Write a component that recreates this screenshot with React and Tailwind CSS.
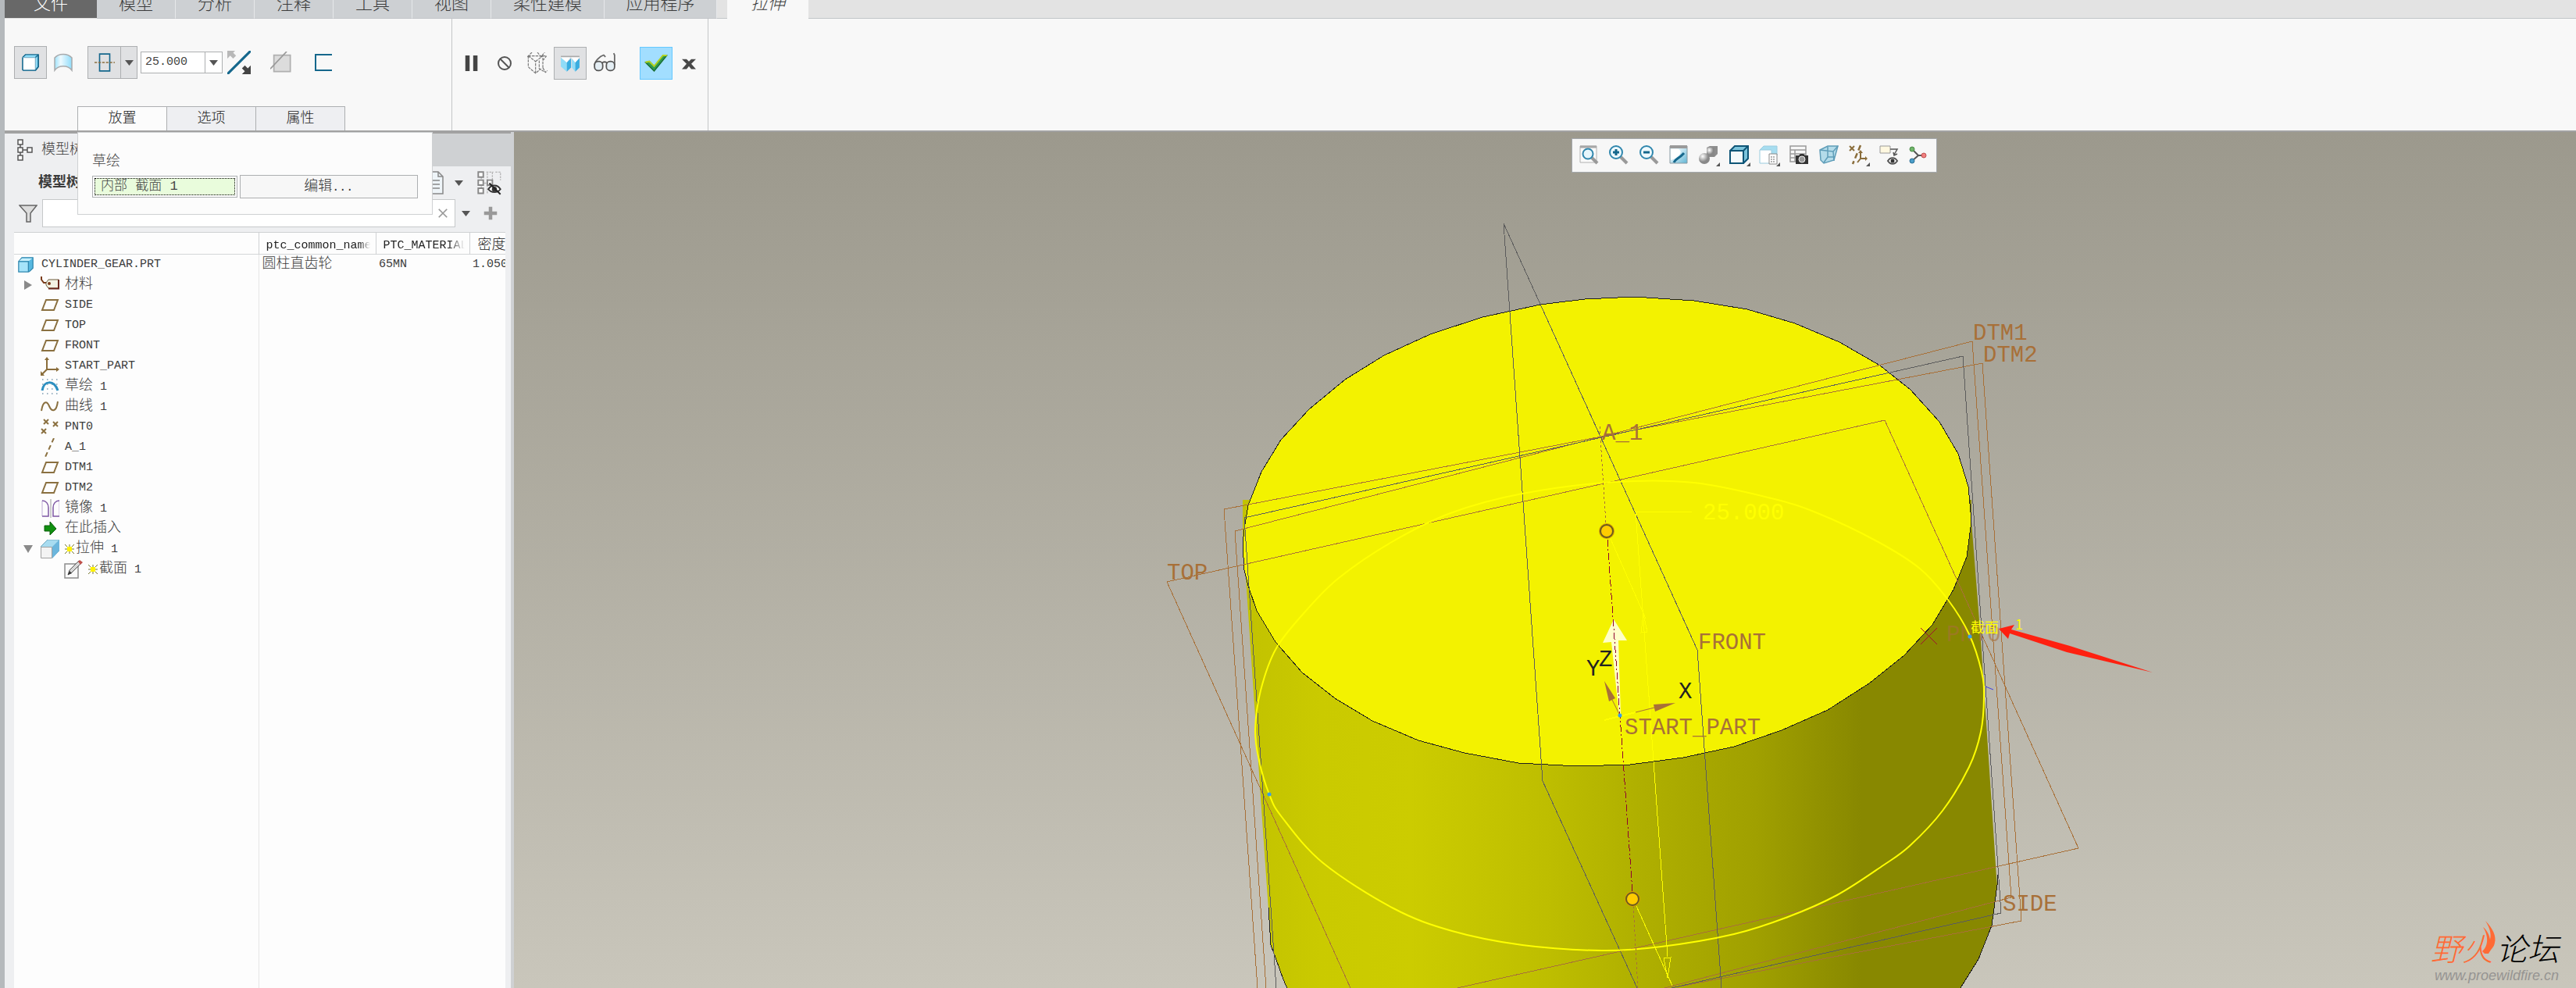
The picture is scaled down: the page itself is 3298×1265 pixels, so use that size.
import clsx from 'clsx'

const RIBBON_TABS = [
  { label: '模型', width: 'w-[101px]' },
  { label: '分析', width: 'w-[101px]' },
  { label: '注释', width: 'w-[101px]' },
  { label: '工具', width: 'w-[101px]' },
  { label: '视图', width: 'w-[101px]' },
  { label: '柔性建模', width: 'w-[145px]' },
  { label: '应用程序', width: 'w-[144px]' },
]

const TREE = [
  { icon: 'material', label: '材料', caret: 'right' },
  { icon: 'plane', label: 'SIDE' },
  { icon: 'plane', label: 'TOP' },
  { icon: 'plane', label: 'FRONT' },
  { icon: 'csys', label: 'START_PART' },
  { icon: 'sketch', label: '草绘 1' },
  { icon: 'curve', label: '曲线 1' },
  { icon: 'points', label: 'PNT0' },
  { icon: 'axis', label: 'A_1' },
  { icon: 'plane', label: 'DTM1' },
  { icon: 'plane', label: 'DTM2' },
  { icon: 'mirror', label: '镜像 1' },
  { icon: 'insert', label: '在此插入' },
  { icon: 'extrude', label: '拉伸 1', caret: 'down', fresh: true },
  { icon: 'section', label: '截面 1', fresh: true, child: true },
]

// Latin runs are set in a narrower mono size so two of them fill one CJK cell
function Mixed({ text }) {
  return text.split(/([\x20-\x7e]+)/).filter(Boolean).map((part, i) => (
    <span key={i} className={/^[\x20-\x7e]/.test(part) ? 'text-[15px] whitespace-pre' : 'text-[18px]'}>
      {part}
    </span>
  ))
}

/* ---------- tree icons ---------- */

const TREE_ICONS = {
  material: (
    <>
      <path d="M1 1v4l3 4h4" fill="none" stroke="#7a3b1a" strokeWidth="2" />
      <path d="M10 5h13v11H10l-3-4V9z" fill="#f4f3e4" stroke="#6b5b3a" strokeWidth="1" />
      <path d="M10 16.500h13V5" fill="none" stroke="#6b2a1e" strokeWidth="2" />
      <circle cx="11" cy="10" r="2" fill="#7a3b1a" />
    </>
  ),
  plane: <path d="M7 5h15l-5 13H2z" fill="none" stroke="#8a7040" strokeWidth="2" />,
  csys: (
    <>
      <path d="M8 2v14h14M8 16l-6 6" fill="none" stroke="#8a6d3b" strokeWidth="2" />
      <path d="M5 4l3-4 3 4zM20 13l4 3-4 3zM0 18v6h5z" fill="#8a6d3b" />
    </>
  ),
  sketch: (
    <>
      <path d="M2 3h20M2 9h20M2 15h20M2 21h20" stroke="#7d9bb0" strokeWidth="1.500" strokeDasharray="1.500 4.500" />
      <path d="M2 17c2-13 15-14 20 0" fill="none" stroke="#2c8fc0" strokeWidth="3" />
    </>
  ),
  curve: <path d="M1 17C3 4 8 4 11 11s9 9 11-6" fill="none" stroke="#8a7040" strokeWidth="2" />,
  points: (
    <path d="M4 2l6 6m0-6L4 8M16 5l6 6m0-6l-6 6M1 14l6 6m0-6l-6 6" fill="none" stroke="#8a7040" strokeWidth="2" />
  ),
  axis: <path d="M17 0L6 24" stroke="#8a7040" strokeWidth="2" strokeDasharray="6 4" />,
  mirror: (
    <>
      <path d="M2 2v20M24 2v20" stroke="#d4c8e4" strokeWidth="1.500" />
      <path d="M2 2c5 0 8 4 8 9v11H2M24 2c-5 0-8 4-8 9v11h8" fill="none" stroke="#7e57a4" strokeWidth="1.500" />
      <path d="M13 0v24" stroke="#9a9a9a" strokeWidth="1" />
    </>
  ),
  insert: <path d="M5 8h7V3l8 9-8 8v-5H5z" fill="#109010" stroke="#0a5c0a" />,
  extrude: (
    <>
      <path d="M0 9L9 0h15v14l-9 9z" fill="#a8dcf0" stroke="#6fa8c0" />
      <path d="M15 9l9-9v14l-9 10z" fill="#6cb6dc" />
      <path d="M.5 9.500h14v14H.5z" fill="#f3f3f3" stroke="#a0a0a0" />
    </>
  ),
  section: (
    <>
      <path d="M1 5h17v18H1z" fill="#fafafa" stroke="#8c8c8c" strokeWidth="1.500" />
      <path d="M5 19l2-6L19 1l3 3L10 16z" fill="#d8d8d8" stroke="#555" />
      <path d="M5 19l2-5 3 3z" fill="#333" />
      <path d="M18 2l2-2 4 3-3 3z" fill="#c0504a" />
    </>
  ),
}

function Icon({ children, size = 24, className }) {
  return (
    <svg width={size} height={size} viewBox="0 0 24 24" className={clsx('shrink-0', className)} aria-hidden="true">
      {children}
    </svg>
  )
}

function Caret({ className }) {
  return (
    <svg width="11" height="7" viewBox="0 0 11 7" className={clsx('shrink-0', className)} aria-hidden="true">
      <path d="M0 0h11L5.500 7z" fill="#555" />
    </svg>
  )
}

function Fresh() {
  return (
    <svg width="12" height="12" viewBox="0 0 12 12" className="mr-[2px] shrink-0" aria-hidden="true">
      <path d="M0 0l12 12M12 0L0 12M6 0v12M0 6h12" stroke="#777730" strokeWidth="1" />
      <path d="M3 3h6v6H3z" fill="#fff200" />
    </svg>
  )
}

/* ---------- ribbon ---------- */

function Ribbon() {
  return (
    <nav className="flex h-6 shrink-0 overflow-hidden bg-[#e3e3e3] text-[22px] leading-[22px] text-[#3c3c3c]">
      <button className="flex h-[23px] w-[118px] items-end justify-center bg-[#686868] pb-[5px] text-white">文件</button>
      {RIBBON_TABS.map((tab) => (
        <button
          key={tab.label}
          className={clsx(
            'flex items-end justify-center border-r border-b border-r-[#e6e8ea] border-b-[#c2c5c8] bg-[#cdd0d3] pb-[5px]',
            tab.width,
          )}
        >
          {tab.label}
        </button>
      ))}
      <div className="w-[13px] border-b border-[#c2c5c8]" />
      <button className="flex w-[104px] items-end justify-center bg-[#f8f8f8] pb-[6px] italic">拉伸</button>
      <div className="flex-1 border-b border-[#c2c5c8]" />
    </nav>
  )
}

function ToolButton({ label, pressed, accent, className, children }) {
  return (
    <button
      aria-label={label}
      className={clsx(
        'flex h-[42px] w-[42px] shrink-0 items-center justify-center border',
        pressed && 'border-[#adafb1] bg-[#e0e1e3]',
        accent && 'border-[#66c8ff] bg-[#a2deff]',
        !pressed && !accent && 'border-transparent',
        className,
      )}
    >
      {children}
    </button>
  )
}

function Dashboard() {
  return (
    <section className="flex h-[145px] shrink-0 border-b-2 border-[#a2a2a2] bg-[#f8f8f8]">
      <div className="flex w-[573px] flex-col justify-between border-r border-[#c4c6c8] pt-[35px]">
        <div className="flex items-center pl-3">
          <ToolButton label="实体" pressed>
            <Icon size={22}>
              <path d="M1 5l4-4h18v17l-4 5" fill="#8edcf8" stroke="#15678c" strokeWidth="1.500" />
              <path d="M1 5h18v18H2l-1-1z" fill="#fff" stroke="#7fb4cc" strokeWidth="1.500" />
              <path d="M19 5l4-4M1 5v17l1 1h17l4-5V1" fill="none" stroke="#15678c" strokeWidth="1.500" />
            </Icon>
          </ToolButton>
          <ToolButton label="曲面">
            <Icon>
              <defs>
                <linearGradient id="surf">
                  <stop offset="0" stopColor="#9fe2fa" />
                  <stop offset=".35" stopColor="#eefaff" />
                  <stop offset="1" stopColor="#8fdcfa" />
                </linearGradient>
              </defs>
              <path d="M1 6c5-6 17-6 22 0v16c-5-7-17-7-22 0z" fill="url(#surf)" stroke="#a8aaac" strokeWidth="1.500" />
            </Icon>
          </ToolButton>
          <div className="ml-[10px] flex border border-[#adafb1] bg-[#e0e1e3]">
            <button aria-label="深度选项" className="flex h-10 w-[41px] items-center justify-center">
              <Icon size={26}>
                <path d="M6 2h12v20H6z" fill="none" stroke="#15678c" strokeWidth="1.500" />
                <path d="M0 12h24" stroke="#8a7040" strokeWidth="1.500" strokeDasharray="3 1.500" />
              </Icon>
            </button>
            <button aria-label="更多深度选项" className="flex w-[21px] items-center justify-center border-l border-[#adafb1]">
              <Caret />
            </button>
          </div>
          <div className="ml-1 flex h-7 w-[105px] border border-[#adafb1] bg-white">
            <input
              aria-label="深度值"
              defaultValue="25.000"
              className="w-[81px] bg-transparent pl-[5px] text-[15px] text-[#444] outline-none"
            />
            <button aria-label="最近值" className="flex flex-1 items-center justify-center border-l border-[#adafb1]">
              <Caret />
            </button>
          </div>
          <ToolButton label="反向">
            <Icon size={30}>
              <path d="M0 24L24 0" stroke="#15678c" strokeWidth="2.500" />
              <path d="M0 8V0h8L6 2l3 3-3 3-3-3z" fill="#b8b8b8" />
              <path d="M24 15v9h-9l3-3-3-3 3-3 3 3z" fill="#444" />
            </Icon>
          </ToolButton>
          <ToolButton label="移除材料" className="ml-3">
            <Icon size={28}>
              <path d="M4 4h18v18H4z" fill="#dcdcdc" stroke="#b0b0b0" strokeWidth="1.500" />
              <path d="M0 19L18 0" stroke="#999" strokeWidth="1.500" />
            </Icon>
          </ToolButton>
          <ToolButton label="加厚草绘" className="ml-3">
            <Icon>
              <path d="M23 2H2v20h21" fill="none" stroke="#15678c" strokeWidth="2" />
            </Icon>
          </ToolButton>
        </div>
        <div role="tablist" className="ml-[93px] flex h-[31px] text-[18px] text-[#222]">
          <button role="tab" aria-selected="true" className="w-[115px] border border-b-0 border-[#adafb1] bg-[#fcfcfc]">放置</button>
          <button role="tab" className="-ml-px w-[115px] border border-b-0 border-[#adafb1] bg-[#eeeff2]">选项</button>
          <button role="tab" className="-ml-px w-[115px] border border-b-0 border-[#adafb1] bg-[#eeeff2]">属性</button>
        </div>
      </div>

      <div className="flex w-[328px] items-start border-r border-[#c4c6c8] pt-[36px] pl-1">
        <ToolButton label="暂停">
          <Icon size={22}>
            <path d="M3 1h6v22H3zM14 1h6v22h-6z" fill="#444" />
          </Icon>
        </ToolButton>
        <ToolButton label="无预览">
          <Icon>
            <circle cx="12" cy="12" r="8" fill="none" stroke="#555" strokeWidth="2" />
            <path d="M6 6l12 12" stroke="#555" strokeWidth="2" />
          </Icon>
        </ToolButton>
        <ToolButton label="未附着预览">
          <Icon size={28}>
            <path
              d="M2 4h20M2 4l8 6v13M10 10l8-6v13M2 4v12l8 7 6-5M18 9l4-5M18 17l3 5 2-2M6 0L1 5M12 0l4 5 4-5M14 9v9l7 4"
              fill="none"
              stroke="#777"
              strokeWidth="1"
              strokeDasharray="3 1"
            />
          </Icon>
        </ToolButton>
        <ToolButton label="附着预览" pressed>
          <Icon size={26}>
            <path d="M1 4h22" stroke="#aaa" strokeWidth="1.500" />
            <path d="M1 5l7 6v11l-7-6z" fill="#8fdcf8" />
            <path d="M8 11l5-5v11l-5 5z" fill="#39ade0" />
            <path d="M14 6l4 5v11l-4-5z" fill="#8fdcf8" />
            <path d="M18 11l5-5v11l-5 5z" fill="#39ade0" />
            <path d="M1 5h11l-4 6zM13 5h10l-5 6z" fill="#fff" />
          </Icon>
        </ToolButton>
        <ToolButton label="验证" className="ml-[2px]">
          <Icon size={28}>
            <path d="M1 14c0-4 6-10 10-11l2 2M23 14V3l-1-2" fill="none" stroke="#666" strokeWidth="1.500" />
            <rect x="1" y="10" width="9" height="10" rx="4" fill="#e4eef4" stroke="#555" strokeWidth="1.500" />
            <rect x="14" y="10" width="9" height="10" rx="4" fill="#e4eef4" stroke="#555" strokeWidth="1.500" />
            <path d="M9 12c2-2 4-2 6 0" fill="none" stroke="#555" strokeWidth="1.500" />
          </Icon>
        </ToolButton>
        <ToolButton label="确定" accent className="ml-6">
          <Icon size={30}>
            <path d="M1 11l4-1 5 5L19 4h4L10 20z" fill="#2f9a50" stroke="#176b30" />
            <path d="M1 11l4-1 5 5L19 4h4" fill="none" stroke="#b5d420" strokeWidth="1.500" />
          </Icon>
        </ToolButton>
        <ToolButton label="取消">
          <Icon size={18}>
            <path d="M0 5h8l4 4 4-4h8l-8 8 8 9h-8l-4-5-4 5H0l8-9z" fill="#484848" />
          </Icon>
        </ToolButton>
      </div>
    </section>
  )
}

// Slide-down panel of the active dashboard tab, lies over the tree
function PlacementPanel() {
  return (
    <div className="absolute top-0 left-[93px] z-10 h-[106px] w-[455px] border border-[#cfd1d3] bg-[#fcfcfc] px-[18px] pt-[25px]">
      <label htmlFor="section" className="block text-[18px] leading-[24px] text-[#444]">草绘</label>
      <div className="mt-[5px] flex items-center gap-[3px]">
        <div className="w-[186px] border border-[#adafb1] bg-white p-[2px]">
          <input
            id="section"
            readOnly
            value="内部 截面 1"
            className="block h-[22px] w-full border border-dotted border-black bg-[#e9fcdc] pl-[7px] text-[17px] text-[#444] outline-none"
          />
        </div>
        <button className="h-[30px] w-[229px] border border-[#adafb1] bg-[#f7f7f7] text-[#333]">
          <Mixed text="编辑..." />
        </button>
      </div>
    </div>
  )
}

function ModelTree() {
  return (
    <aside className="flex w-[652px] shrink-0 flex-col border-r-4 border-[#cfd1d3] bg-[#eeeff1] text-[#3c3c3c]">
      <div className="flex h-11 border-t-2 border-[#a2a2a2] bg-[#cfd1d3]">
        <div className="flex w-[160px] items-center bg-[#eeeff1] pl-4">
          <svg width="20" height="28" viewBox="0 0 20 28" aria-hidden="true">
            <path d="M4 7v14M7 14h6" stroke="#555" strokeWidth="1.500" />
            <path d="M1 1h6v6H1zM1 11h6v6H1zM1 21h6v6H1zM13 11h6v6h-6z" fill="#fff" stroke="#555" strokeWidth="1.500" />
          </svg>
          <span className="ml-[11px] text-[18px]">模型树</span>
        </div>
      </div>

      <div className="flex h-[42px] items-center pr-3 pl-[43px]">
        <h2 className="flex-1 text-[18px] font-bold">模型树</h2>
        <button aria-label="设置">
          <svg width="26" height="30" viewBox="0 0 26 30" aria-hidden="true">
            <path d="M1 1h18l6 6v22H1z" fill="#eef4f8" stroke="#888" strokeWidth="1.500" />
            <path d="M19 1v6h6M5 12h16M5 17h16M5 22h16" fill="none" stroke="#888" strokeWidth="1.500" />
          </svg>
        </button>
        <Caret className="ml-[14px]" />
        <button aria-label="显示" className="ml-[18px]">
          <Icon size={31}>
            <path d="M4 6v12M7 12h5M10 2v20M9 1h7M15 1v8M18 1h5v8" fill="none" stroke="#b4b4b4" strokeDasharray="2 1" />
            <path d="M1 1h5v5H1zM1 9h5v5H1zM1 17h5v5H1zM10 9h5v5h-5z" fill="#fff" stroke="#888" strokeWidth="1.500" />
            <path d="M11 18c3-5 9-5 12 0-3 4-9 4-12 0z" fill="#fff" stroke="#333" strokeWidth="1.500" />
            <circle cx="17" cy="18" r="2.500" fill="#333" />
            <path d="M12 12l11 11" stroke="#222" strokeWidth="1.500" />
          </Icon>
        </button>
      </div>

      <div className="flex h-9 items-center pl-[18px]">
        <Icon>
          <path d="M1 2h22l-8 10v11h-5V12z" fill="#ddd" stroke="#666" strokeWidth="1.500" />
        </Icon>
        <div className="ml-[6px] flex h-9 w-[529px] items-center border border-[#c6c8ca] bg-white">
          <input aria-label="过滤" className="h-full flex-1 bg-transparent px-2 text-[15px] outline-none" />
          <button aria-label="清除" className="mr-2">
            <Icon size={14}>
              <path d="M3 3l18 18M21 3L3 21" stroke="#999" strokeWidth="3" />
            </Icon>
          </button>
        </div>
        <Caret className="ml-2" />
        <button aria-label="添加" className="ml-[17px]">
          <Icon size={18}>
            <path d="M9 1h6v8h8v6h-8v8H9v-8H1V9h8z" fill="#999" />
          </Icon>
        </button>
      </div>

      <div className="mt-[6px] mr-[7px] ml-3 min-h-0 flex-1 overflow-hidden border-t border-[#cfd1d3] bg-[#fdfdfd]">
        <table className="h-full w-full table-fixed border-collapse text-left leading-[20px] whitespace-nowrap">
          <colgroup>
            <col className="w-[313px]" />
            <col className="w-[150px]" />
            <col className="w-[120px]" />
            <col />
          </colgroup>
          <thead>
            <tr className="h-[27px] border-b border-[#d4d6d8] text-[#222]">
              <th aria-label="名称" className="border-r border-[#cfd1d3]" />
              <th className="overflow-hidden border-r border-[#cfd1d3] pt-[6px] pr-[7px] pl-[9px] font-light">
                <div className="overflow-hidden mask-r-from-90% mask-r-to-100%"><Mixed text="ptc_common_name" /></div>
              </th>
              <th className="overflow-hidden border-r border-[#cfd1d3] pt-[6px] pr-[6px] pl-[9px] font-light">
                <div className="overflow-hidden mask-r-from-80% mask-r-to-100%"><Mixed text="PTC_MATERIAL" /></div>
              </th>
              <th className="overflow-hidden pt-[6px] pl-[10px] font-light"><Mixed text="密度" /></th>
            </tr>
          </thead>
          <tbody>
            <tr className="h-[26px]">
              <td className="border-r border-[#e6e6e6]">
                <div className="flex items-center pl-[5px]">
                  <Icon size={20}>
                    <path d="M1 7l5-6h17v16l-6 6" fill="#57b8e0" stroke="#2f86ad" strokeWidth="1.500" />
                    <path d="M1 7h15v16H1z" fill="#a6e4fa" stroke="#2f86ad" strokeWidth="1.500" />
                    <path d="M2 6l4-4h16l-5 4z" fill="#c8f0fc" />
                  </Icon>
                  <span className="ml-[10px]"><Mixed text="CYLINDER_GEAR.PRT" /></span>
                </div>
              </td>
              <td className="pl-[4px]"><Mixed text="圆柱直齿轮" /></td>
              <td className="pl-[4px]"><Mixed text="65MN" /></td>
              <td className="overflow-hidden pl-[4px]"><Mixed text="1.050" /></td>
            </tr>
            {TREE.map((node) => (
              <tr key={node.label} className="h-[26px]">
                <td className="border-r border-[#e6e6e6]">
                  <div className={clsx('flex items-center', node.child ? 'pl-16' : 'pl-[12px]')}>
                    {!node.child && (
                      <span className="flex w-[22px] shrink-0">
                        {node.caret && (
                          <svg width="13" height="12" viewBox="0 0 13 12" aria-hidden="true">
                            <path d={node.caret === 'right' ? 'M1 0l10 6-10 6z' : 'M0 1h12L6 11z'} fill="#8a8a8a" />
                          </svg>
                        )}
                      </span>
                    )}
                    <Icon>{TREE_ICONS[node.icon]}</Icon>
                    <span className="ml-[7px] flex items-center">
                      {node.fresh && <Fresh />}
                      <span><Mixed text={node.label} /></span>
                    </span>
                  </div>
                </td>
                <td colSpan={3} />
              </tr>
            ))}
            <tr>
              <td className="border-r border-[#e6e6e6]" />
              <td colSpan={3} />
            </tr>
          </tbody>
        </table>
      </div>
    </aside>
  )
}

/* ---------- in-graphics toolbar ---------- */

const Corner = () => <path d="M27 22v5h-5z" fill="#555" />

const VIEW_TOOLS = [
  ['重新调整', (
    <>
      <path d="M1 1h21v21H1z" fill="#fafafa" stroke="#b0b0b0" />
      <path d="M1 2h21" stroke="#a8a8a8" strokeWidth="3" />
      <path d="M16 16l7 7" stroke="#999" strokeWidth="4" />
      <circle cx="11" cy="11" r="6.500" fill="#e6f6fc" stroke="#2f86ad" strokeWidth="2" />
    </>
  )],
  ['放大', (
    <>
      <path d="M15 15l8 8" stroke="#999" strokeWidth="4" />
      <circle cx="9" cy="9" r="8" fill="#eef9fd" stroke="#2f86ad" strokeWidth="2" />
      <path d="M9 5v8M5 9h8" stroke="#15678c" strokeWidth="3" />
    </>
  )],
  ['缩小', (
    <>
      <path d="M15 15l8 8" stroke="#999" strokeWidth="4" />
      <circle cx="9" cy="9" r="8" fill="#eef9fd" stroke="#2f86ad" strokeWidth="2" />
      <path d="M5 9h8" stroke="#15678c" strokeWidth="3" />
    </>
  )],
  ['重画', (
    <>
      <defs>
        <linearGradient id="repaint" x2="1" y2="1">
          <stop offset=".3" stopColor="#e8f6fb" />
          <stop offset="1" stopColor="#5fb4d4" />
        </linearGradient>
      </defs>
      <path d="M1 1h22v22H1z" fill="url(#repaint)" stroke="#8a9aa2" />
      <path d="M1 2h22" stroke="#9a9a9a" strokeWidth="4" />
      <path d="M2 5h10c7 3-1 12-10 14z" fill="#fff" />
      <path d="M6 22c2-5 6-4 13-12" fill="none" stroke="#15678c" strokeWidth="3" />
    </>
  )],
  ['渲染', (
    <>
      <defs>
        <radialGradient id="ball" cx=".35" cy=".3">
          <stop offset="0" stopColor="#fff" />
          <stop offset="1" stopColor="#888" />
        </radialGradient>
      </defs>
      <path d="M10 3l4-2h10v10l-4 4H10z" fill="#8e8e8e" />
      <path d="M10 3h10v11H10z" fill="url(#ball)" />
      <circle cx="7" cy="17" r="7" fill="url(#ball)" />
      <Corner />
    </>
  )],
  ['显示样式', (
    <>
      <path d="M1 7l6-6h17v16l-6 6" fill="#7cc4dc" stroke="#0f5577" strokeWidth="2" />
      <path d="M1 7h17v16H1z" fill="#f4fafc" stroke="#0f5577" strokeWidth="2" />
      <path d="M18 7l6-6" stroke="#0f5577" strokeWidth="2" />
      <Corner />
    </>
  )],
  ['已保存方向', (
    <>
      <path d="M1 6l5-5h17v12h-6" fill="#a6ddf0" stroke="#9accdf" />
      <path d="M1 6h15v17H1z" fill="#fff" stroke="#9accdf" />
      <path d="M13 11h10v13H13z" fill="#fff" stroke="#888" />
      <path d="M15 15h6M15 18h6M15 21h6" stroke="#666" strokeDasharray="2 1" />
      <Corner />
    </>
  )],
  ['视图管理器', (
    <>
      <path d="M1 1h20v20H1zM1 6h20M1 11h20M1 16h20M7 6v15" fill="none" stroke="#999" strokeWidth="1.500" />
      <path d="M8 13h4l2-2h4l2 2h4v11H8z" fill="#333" />
      <circle cx="16" cy="18" r="4" fill="#999" stroke="#eee" />
    </>
  )],
  ['透视图', (
    <>
      <path d="M1 6l10-5h13l-5 18-13 4-4-4z" fill="#b4dcea" stroke="#5f9db8" strokeWidth="1.500" />
      <path d="M1 6l17 2 6-7M18 8l1 12M6 22l5-7h9M11 15V2" fill="none" stroke="#5f9db8" strokeWidth="1.500" />
    </>
  )],
  ['基准显示', (
    <>
      <path d="M1 1l6 6m0-6L1 7" stroke="#8a6d3b" strokeWidth="2" />
      <path d="M15 0L5 24" stroke="#8a6d3b" strokeWidth="2.500" strokeDasharray="7 4" />
      <path d="M15 8v9h8M15 17l-4 5" fill="none" stroke="#8a6d3b" strokeWidth="2" />
      <path d="M21 14l3 3-3 3zM12 10l3-4 3 4z" fill="#8a6d3b" />
      <Corner />
    </>
  )],
  ['注释显示', (
    <>
      <path d="M1 1h13v9H1z" fill="#fff8e0" stroke="#999" />
      <path d="M14 5h9l-4 7M18 9l1 4 4-2" fill="none" stroke="#555" strokeWidth="1.500" />
      <path d="M11 20c3-5 9-5 12 0-3 5-9 5-12 0z" fill="#fff" stroke="#555" strokeWidth="2" />
      <circle cx="17" cy="20" r="2.500" fill="#333" />
    </>
  )],
  ['旋转中心', (
    <>
      <path d="M4 5l8 8h7M12 13l-8 7" fill="none" stroke="#555" strokeWidth="2" />
      <circle cx="4" cy="5" r="3" fill="#6fb56a" stroke="#4a8a46" />
      <circle cx="19" cy="13" r="3" fill="#f08080" stroke="#c05050" />
      <circle cx="4" cy="20" r="3" fill="#4a9cc8" stroke="#2a6f96" />
    </>
  )],
]

function ViewToolbar() {
  return (
    <div className="absolute top-2 left-[1354px] flex h-[44px] w-[468px] items-center justify-between border border-[#a4a8ac] bg-[#f7f7f7] px-[8px]">
      {VIEW_TOOLS.map(([label, art]) => (
        <button key={label} aria-label={label}>
          <svg width="28" height="28" viewBox="0 0 28 28" aria-hidden="true">
            <g transform="translate(1 1)">{art}</g>
          </svg>
        </button>
      ))}
    </div>
  )
}

/* ---------- model view ---------- */

const TOP_FACE = `1591,697 1593,677 1598,647 1615,604 1640,563 1676,524 1722,486 1772,455 1831,428 1898,406
  1972,390 2029,383 2092,380 2169,385 2237,396 2298,414 2355,438 2407,468 2446,499 2483,540 2507,581 2520,623
  2524,667 2518,713 2501,755 2474,800 2438,839 2393,875 2340,909 2281,935 2220,956 2155,970 2087,979 2020,981
  1944,977 1875,964 1816,948 1757,923 1709,894 1667,861 1633,822 1609,782 1598,750 1593,730`

const SKETCH_CIRCLE = [
  [1607, 935], [1614, 884], [1634, 830], [1672, 782], [1714, 740], [1780, 695], [1857, 657], [1949, 632],
  [2068, 617], [2169, 618], [2268, 638], [2327, 657], [2403, 693], [2458, 728], [2494, 768], [2521, 812],
  [2537, 860], [2540, 893], [2536, 937], [2521, 982], [2487, 1038], [2445, 1083], [2411, 1108], [2352, 1146],
  [2289, 1174], [2220, 1196], [2127, 1212], [2051, 1217], [1949, 1210], [1859, 1192], [1784, 1163],
  [1694, 1105], [1641, 1046], [1625, 1017], [1612, 974],
]

// Closed Catmull-Rom spline through the given points
function closedSpline(pts) {
  const n = pts.length
  const at = (i) => pts[(i + n) % n]
  let d = `M${pts[0]}`
  for (let i = 0; i < n; i++) {
    const [p0, p1, p2, p3] = [at(i - 1), at(i), at(i + 1), at(i + 2)]
    const c1 = [p1[0] + (p2[0] - p0[0]) / 6, p1[1] + (p2[1] - p0[1]) / 6]
    const c2 = [p2[0] - (p3[0] - p1[0]) / 6, p2[1] - (p3[1] - p1[1]) / 6]
    d += `C${c1} ${c2} ${p2}`
  }
  return d + 'Z'
}

const DATUM_LABELS = [
  ['TOP', 1494, 742],
  ['DTM1', 2526, 435],
  ['DTM2', 2539, 463],
  ['FRONT', 2174, 831],
  ['START_PART', 2080, 940],
  ['SIDE', 2564, 1166],
  ['A_1', 2051, 563],
]

function Handle({ x, y }) {
  return (
    <g>
      <circle cx={x} cy={y} r="9" fill="#ffcc00" stroke="#d8a000" strokeWidth="2" />
      <circle cx={x} cy={y} r="8" fill="#ffcc00" stroke="#6a5a20" strokeWidth="2" />
    </g>
  )
}

function Scene() {
  return (
    <svg
      className="absolute inset-0 h-full w-full"
      viewBox="658 169 2640 1096"
      preserveAspectRatio="xMinYMin slice"
      role="img"
      aria-label="CYLINDER_GEAR"
    >
      <defs>
        <linearGradient id="side" gradientUnits="userSpaceOnUse" x1="1595" y1="0" x2="2555" y2="0">
          <stop offset="0" stopColor="#c2c200" />
          <stop offset=".1" stopColor="#caca00" />
          <stop offset=".22" stopColor="#cccc00" />
          <stop offset=".4" stopColor="#bebe00" />
          <stop offset=".52" stopColor="#b0b000" />
          <stop offset=".68" stopColor="#a0a000" />
          <stop offset=".82" stopColor="#888800" />
          <stop offset="1" stopColor="#888800" />
        </linearGradient>
      </defs>

      {/* solid */}
      <path
        d="M1591 697L1595 740L1614 1021L1624 1165L1627 1210L1634 1229L1643 1254L1649 1268H2508L2533 1228L2550 1185L2557 1133L2556 1123L2536 820L2524 668V640H1591z"
        fill="url(#side)"
      />
      <polygon points={TOP_FACE} fill="#f3f200" stroke="#1e1e1e" strokeWidth="1" shapeRendering="crispEdges" />
      <path
        d="M1624 1162L1627 1210L1634 1229L1643 1254L1649 1268M2508 1268L2533 1228L2550 1185L2557 1133V1120"
        fill="none"
        stroke="#1e1e1e"
        shapeRendering="crispEdges"
      />

      {/* datum planes */}
      <g fill="none" stroke="#a87038" shapeRendering="crispEdges">
        <path d="M1621 1265L1581 680L2525 437L2575 1149L2131 1265" />
        <path d="M1610 1265L1567 652L2538 465L2588 1179L2140 1265" />
        <path d="M1729 1265L1494 745L2413 538L2661 1086L1866 1265" />
      </g>
      <g fill="none" stroke="#5c5c5c" shapeRendering="crispEdges">
        <path d="M1634 1265L1593 663L2513 456L2562 1169L2140 1265" />
        <path d="M2096 1265L1975 1000L1925 286L2173 832L2204 1265" />
      </g>
      <text x="2492" y="821" className="font-['Liberation_Mono'] text-[29px]" fill="#a87038" fillOpacity=".6">PNT0</text>

      {/* section circle and depth dimension */}
      <path d={closedSpline(SKETCH_CIRCLE)} fill="none" stroke="#ffff00" strokeWidth="2" />
      <g fill="none" stroke="#ffff00" shapeRendering="crispEdges">
        <path d="M2166 655H2094L2135 1225M2062 690L2107 792M2095 1160L2141 1262" />
        <path d="M2104 786L2101 810L2109 809zM2130 1227L2139 1226L2135 1252z" />
        <path d="M2054 922L2094 912" strokeWidth="2" />
      </g>

      {/* axis */}
      <path d="M2048 546L2056 670M2091 1160L2097 1265" stroke="#a87038" strokeDasharray="3 3" shapeRendering="crispEdges" />
      <path d="M2066 793L2083 820L2072 820L2075 916L2073 916L2063 822L2052 823z" fill="#ffffc8" />
      <path d="M2058 691L2090 1142" stroke="#900030" strokeDasharray="9 3 2 3" shapeRendering="crispEdges" />

      {/* coordinate system */}
      <g fill="#a87038" stroke="#a87038">
        <path d="M2117 902L2145 900L2119 911zM2054 872L2068 894L2060 898z" stroke="none" />
        <path d="M2094 912L2118 906M2064 896L2073 914" />
      </g>

      <g fill="none" stroke="#a01030" shapeRendering="crispEdges">
        <path d="M2459 804L2480 825M2480 804L2459 825" />
      </g>
      <path d="M2542 879L2552 883" stroke="#4040e0" />

      <g className="font-['Liberation_Mono'] text-[29px]" fill="#a87038">
        {DATUM_LABELS.map(([label, x, y]) => (
          <text key={label} x={x} y={y}>{label}</text>
        ))}
        <text x="2180" y="665" fill="#ffff00">25.000</text>
        <g fill="#222">
          <text x="2149" y="894">X</text>
          <text x="2031" y="865">Y</text>
          <text x="2047" y="853">Z</text>
        </g>
      </g>
      <g className="font-['Noto_Sans_CJK_SC'] text-[18px] font-normal" fill="#ffff00">
        <text x="2523" y="810">截面</text>
        <text x="2580" y="806">1</text>
      </g>

      <g fill="#38a0e8">
        <circle cx="2522" cy="815" r="2.500" />
        <circle cx="1625" cy="1017" r="2.500" />
        <circle cx="2074" cy="916" r="2.500" />
      </g>
      <Handle x={2057} y={680} />
      <Handle x={2090} y={1151} />

      {/* annotation arrow */}
      <path d="M2559 805L2579 800L2575 806L2650 827L2756 861L2646 835L2573 811L2571 818z" fill="#ff2010" />
    </svg>
  )
}

function Watermark() {
  return (
    <div className="absolute right-[22px] bottom-[8px] flex flex-col items-end italic">
      <div className="relative text-[40px] leading-[42px]">
        <span className="text-[#ff6a35]">野火</span>
        <span className="ml-1 text-black">论坛</span>
        <svg className="absolute -top-5 left-[64px]" width="20" height="44" viewBox="0 0 20 44" aria-hidden="true">
          <path d="M6 0c10 10 14 20 12 28-1 6-5 8-8 14H5l-3-3c7-6 9-18 1-31 5 4 8 10 9 16C14 16 11 8 6 0z" fill="#ff6a35" />
        </svg>
      </div>
      <div className="font-['Liberation_Sans'] text-[18px] leading-[16px] text-[#969492]">www.proewildfire.cn</div>
    </div>
  )
}

export default function App() {
  return (
    <div className="flex h-screen flex-col overflow-hidden border-l-6 border-[#b5b9bc] bg-[#f8f8f8] font-['Liberation_Mono','Noto_Sans_CJK_SC',monospace] font-light">
      <Ribbon />
      <Dashboard />
      <div className="relative flex min-h-0 flex-1">
        <ModelTree />
        <PlacementPanel />
        <main className="relative min-w-0 flex-1 overflow-hidden bg-linear-to-b from-[#9c998d] to-[#c9c6bb]">
          <Scene />
          <ViewToolbar />
          <Watermark />
        </main>
      </div>
    </div>
  )
}
